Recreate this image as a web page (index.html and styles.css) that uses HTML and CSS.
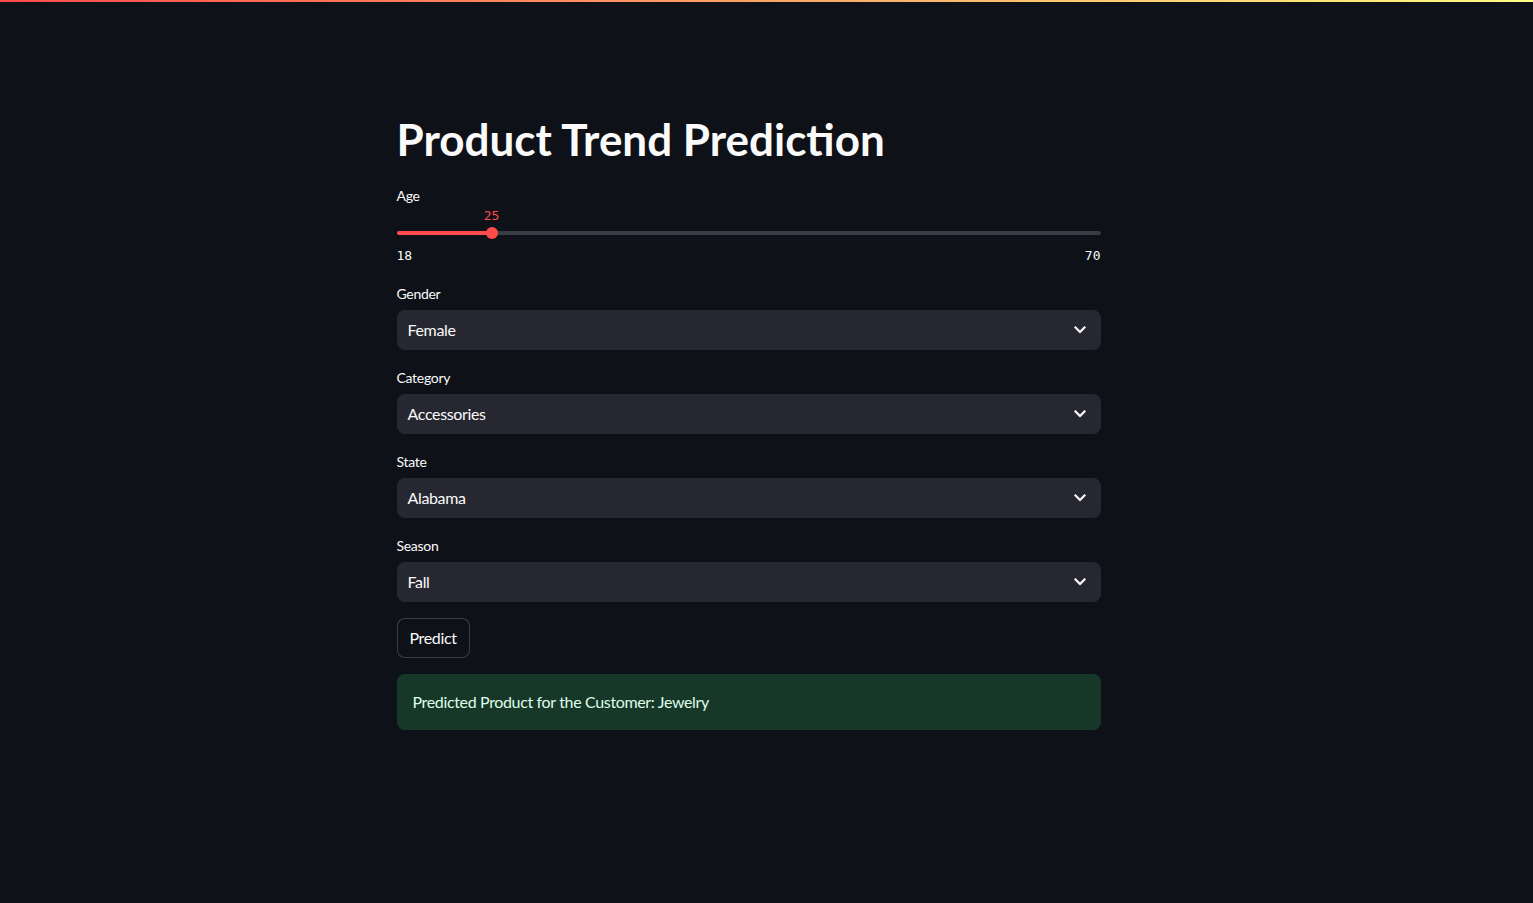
FILE: index.html
```html
<!DOCTYPE html>
<html lang="en">
<head>
<meta charset="utf-8">
<title>Product Trend Prediction</title>
<link rel="stylesheet" href="styles.css">
</head>
<body>
<div class="decoration"></div>
<main class="main">
  <div class="block">
    <h1 class="title">Product Trend Prediction</h1>

    <div class="widget">
      <div class="label">Age</div>
      <div class="slider">
        <div class="slider-track">
          <div class="slider-fill" style="width: 13.5%"></div>
          <div class="slider-thumb" style="left: 13.5%">
            <span class="slider-value">25</span>
          </div>
        </div>
        <div class="slider-range"><span>18</span><span>70</span></div>
      </div>
    </div>

    <div class="widget">
      <div class="label">Gender</div>
      <div class="select"><span>Female</span>
        <svg class="chev" width="12" height="8" viewBox="0 0 12 8"><path d="M1.5 1.5 L6 6 L10.5 1.5" fill="none" stroke="#fafafa" stroke-width="2.2" stroke-linecap="square"/></svg>
      </div>
    </div>

    <div class="widget">
      <div class="label">Category</div>
      <div class="select"><span>Accessories</span>
        <svg class="chev" width="12" height="8" viewBox="0 0 12 8"><path d="M1.5 1.5 L6 6 L10.5 1.5" fill="none" stroke="#fafafa" stroke-width="2.2" stroke-linecap="square"/></svg>
      </div>
    </div>

    <div class="widget">
      <div class="label">State</div>
      <div class="select"><span>Alabama</span>
        <svg class="chev" width="12" height="8" viewBox="0 0 12 8"><path d="M1.5 1.5 L6 6 L10.5 1.5" fill="none" stroke="#fafafa" stroke-width="2.2" stroke-linecap="square"/></svg>
      </div>
    </div>

    <div class="widget">
      <div class="label">Season</div>
      <div class="select"><span>Fall</span>
        <svg class="chev" width="12" height="8" viewBox="0 0 12 8"><path d="M1.5 1.5 L6 6 L10.5 1.5" fill="none" stroke="#fafafa" stroke-width="2.2" stroke-linecap="square"/></svg>
      </div>
    </div>

    <div class="widget">
      <button class="btn">Predict</button>
    </div>

    <div class="widget">
      <div class="alert">Predicted Product for the Customer: Jewelry</div>
    </div>
  </div>
</main>
</body>
</html>
```

FILE: styles.css
```css
* { box-sizing: border-box; }
html, body {
  margin: 0;
  padding: 0;
  background: #0e1117;
  color: #fafafa;
  font-family: "Lato", "Noto Sans", sans-serif;
  height: 100%;
}
.decoration {
  height: 2px;
  background: linear-gradient(90deg, #ff4b4b, #fffd80);
}
.main {
  display: flex;
  justify-content: center;
  padding: 94px 36px 0 0;
}
.block {
  width: 704px;
  display: flex;
  flex-direction: column;
  gap: 16px;
}
.title {
  margin: 0;
  padding-top: 17px;
  height: 72px;
  font-size: 44px;
  line-height: 52px;
  font-weight: 700;
  letter-spacing: 0;
  color: #fafafa;
}
.widget { display: flex; flex-direction: column; }
.label {
  font-size: 14px;
  line-height: 24px;
  height: 24px;
  margin-bottom: 4px;
  letter-spacing: -0.3px;
  color: #fafafa;
}
.slider {
  height: 54px;
  padding-top: 19px;
}
.slider-track {
  position: relative;
  height: 4px;
  border-radius: 2px;
  background: #3a3c45;
}
.slider-fill {
  height: 4px;
  border-radius: 2px;
  background: #ff4b4b;
}
.slider-thumb {
  position: absolute;
  top: -4px;
  width: 12px;
  height: 12px;
  margin-left: -6px;
  border-radius: 50%;
  background: #ff4b4b;
}
.slider-value {
  position: absolute;
  bottom: 15px;
  left: 50%;
  transform: translateX(-50%);
  font-family: "DejaVu Sans Mono", "Liberation Mono", monospace;
  font-size: 13px;
  line-height: 16px;
  color: #ff4b4b;
}
.slider-range {
  display: flex;
  justify-content: space-between;
  margin-top: 13px;
  font-family: "DejaVu Sans Mono", "Liberation Mono", monospace;
  font-size: 13px;
  line-height: 16px;
  color: #fafafa;
}
.select {
  height: 40px;
  background: #262730;
  border-radius: 8px;
  display: flex;
  align-items: center;
  justify-content: space-between;
  padding: 0 15px 1px 11px;
  font-size: 16px;
  letter-spacing: -0.35px;
  color: #fafafa;
}
.chev { display: block; }
.btn {
  align-self: flex-start;
  height: 40px;
  padding: 0 12px 1px;
  background: #0e1117;
  border: 1px solid rgba(250, 250, 250, 0.2);
  border-radius: 8px;
  color: #fafafa;
  font-family: inherit;
  font-size: 16px;
  letter-spacing: -0.35px;
}
.alert {
  height: 56px;
  display: flex;
  align-items: center;
  padding: 0 16px 1px;
  background: #173828;
  color: #dffde9;
  border-radius: 8px;
  font-size: 16px;
  letter-spacing: -0.35px;
}
```
